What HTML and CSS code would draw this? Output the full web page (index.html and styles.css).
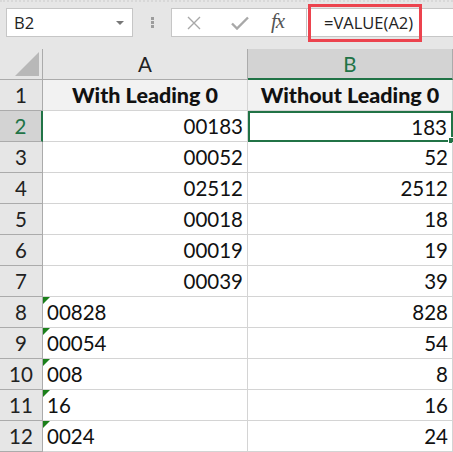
FILE: index.html
```html
<!DOCTYPE html>
<html>
<head>
<meta charset="utf-8">
<link rel="stylesheet" href="styles.css">
</head>
<body>
<div class="app">
  <div class="toolbar">
    <div class="namebox"><span class="name">B2</span><span class="caret"></span></div>
    <div class="dots"><i></i><i></i><i></i></div>
    <div class="fxbox">
      <svg class="ico" width="14" height="14" viewBox="0 0 14 14"><path d="M1 1L13 13M13 1L1 13" stroke="#a8a8a8" stroke-width="1.4" fill="none"/></svg>
      <svg class="ico" width="18" height="14" viewBox="0 0 18 14"><path d="M1 7.5L6 12.5L17 1.5" stroke="#a8a8a8" stroke-width="2.4" fill="none"/></svg>
      <span class="fx">fx</span>
    </div>
    <div class="formula"><span class="ftext">=VALUE(A2)</span></div>
    <div class="highlight"></div>
  </div>
  <div class="sheet">
    <div class="corner"><span class="tri"></span></div>
    <div class="colhead">A</div>
    <div class="colhead sel">B</div>

    <div class="rowhead">1</div>
    <div class="cell title">With Leading 0</div>
    <div class="cell title">Without Leading 0</div>

    <div class="rowhead sel">2</div>
    <div class="cell num">00183</div>
    <div class="cell num active">183</div>

    <div class="rowhead">3</div>
    <div class="cell num">00052</div>
    <div class="cell num">52</div>

    <div class="rowhead">4</div>
    <div class="cell num">02512</div>
    <div class="cell num">2512</div>

    <div class="rowhead">5</div>
    <div class="cell num">00018</div>
    <div class="cell num">18</div>

    <div class="rowhead">6</div>
    <div class="cell num">00019</div>
    <div class="cell num">19</div>

    <div class="rowhead">7</div>
    <div class="cell num">00039</div>
    <div class="cell num">39</div>

    <div class="rowhead">8</div>
    <div class="cell txt">00828</div>
    <div class="cell num">828</div>

    <div class="rowhead">9</div>
    <div class="cell txt">00054</div>
    <div class="cell num">54</div>

    <div class="rowhead">10</div>
    <div class="cell txt">008</div>
    <div class="cell num">8</div>

    <div class="rowhead">11</div>
    <div class="cell txt">16</div>
    <div class="cell num">16</div>

    <div class="rowhead">12</div>
    <div class="cell txt">0024</div>
    <div class="cell num">24</div>
  </div>
</div>
</body>
</html>
```

FILE: styles.css
```css
* { box-sizing: border-box; }
html, body { margin: 0; padding: 0; }
body { width: 453px; height: 452px; overflow: hidden; background: #fff; font-family: Lato, "Noto Sans", sans-serif; }
.app { width: 453px; height: 452px; display: flex; flex-direction: column; }

.toolbar {
  position: relative;
  height: 49px;
  background: #e6e6e6;
  border-top: 2px dotted #d8d8d8;
  display: flex;
  align-items: flex-start;
  padding-top: 6px;
  padding-left: 6px;
  flex-shrink: 0;
}
.namebox {
  width: 127px; height: 29px;
  background: #fff;
  border: 1px solid #c6c6c6;
  display: flex; align-items: center; justify-content: space-between;
  padding: 0 8px 0 7px;
  font-family: "Open Sans", "Noto Sans", sans-serif;
  font-size: 16.5px; color: #222;
}
.caret { width: 0; height: 0; border-left: 4px solid transparent; border-right: 4px solid transparent; border-top: 4px solid #777; margin-top: 1px; }
.dots { width: 38px; height: 29px; display: flex; flex-direction: column; align-items: center; justify-content: center; gap: 1px; }
.dots i { display: block; width: 3px; height: 3px; background: #9c9c9c; }
.fxbox {
  width: 136px; height: 29px;
  background: #fff;
  border: 1px solid #c6c6c6;
  display: flex; align-items: center;
  padding-left: 15px;
}
.fxbox .ico:nth-child(1) { margin-right: 30px; }
.fxbox .ico:nth-child(2) { margin-right: 22px; }
.fx { font-family: "Liberation Serif", serif; font-style: italic; font-size: 21px; color: #555; letter-spacing: -1px; margin-top: -3px; }
.formula {
  flex: 1; height: 29px;
  background: #fff;
  border: 1px solid #c6c6c6; border-left: none; border-right: none;
  display: flex; align-items: center;
  padding-left: 17px;
  font-family: "Open Sans", "Noto Sans", sans-serif;
  font-size: 16.5px; color: #222;
}
.highlight {
  position: absolute;
  left: 308px; top: 2px;
  width: 114px; height: 38px;
  border: 3px solid #ec434e;
}

.sheet {
  display: grid;
  grid-template-columns: 43px 205px 205px;
  grid-auto-rows: 31px;
  font-size: 20.5px;
  color: #111;
}
.corner { background: #e6e6e6; border-right: 1px solid #ababab; border-bottom: 1px solid #ababab; position: relative; }
.tri { position: absolute; right: 3px; bottom: 3px; width: 0; height: 0; border-left: 24px solid transparent; border-bottom: 24px solid #b8b8b8; }
.colhead {
  background: #e6e6e6;
  border-right: 1px solid #ababab;
  border-bottom: 1px solid #ababab;
  display: flex; align-items: center; justify-content: center;
  color: #222;
}
.colhead.sel { background: #d3d3d3; color: #217346; border-bottom: 2px solid #217346; }
.rowhead {
  background: #e6e6e6;
  border-right: 1px solid #ababab;
  border-bottom: 1px solid #ababab;
  display: flex; align-items: center; justify-content: center;
  color: #222;
}
.rowhead.sel { background: #d3d3d3; color: #217346; border-right: 2px solid #217346; }
.cell {
  border-right: 1px solid #d4d4d4;
  border-bottom: 1px solid #d4d4d4;
  display: flex; align-items: center;
  padding: 0 4px;
  position: relative;
  white-space: nowrap;
}
.title { background: #f2f2f2; font-weight: 900; font-size: 21.5px; justify-content: center; }
.num { justify-content: flex-end; }
.txt { justify-content: flex-start; }
.txt::before {
  content: ""; position: absolute; left: 0; top: 0;
  width: 0; height: 0;
  border-top: 7px solid #1a7f1a; border-right: 7px solid transparent;
}
.active { border: 2px solid #217346; }
.active::after {
  content: ""; position: absolute; right: -4px; bottom: -4px;
  width: 5px; height: 5px; background: #217346; border: 1px solid #fff;
}
```
